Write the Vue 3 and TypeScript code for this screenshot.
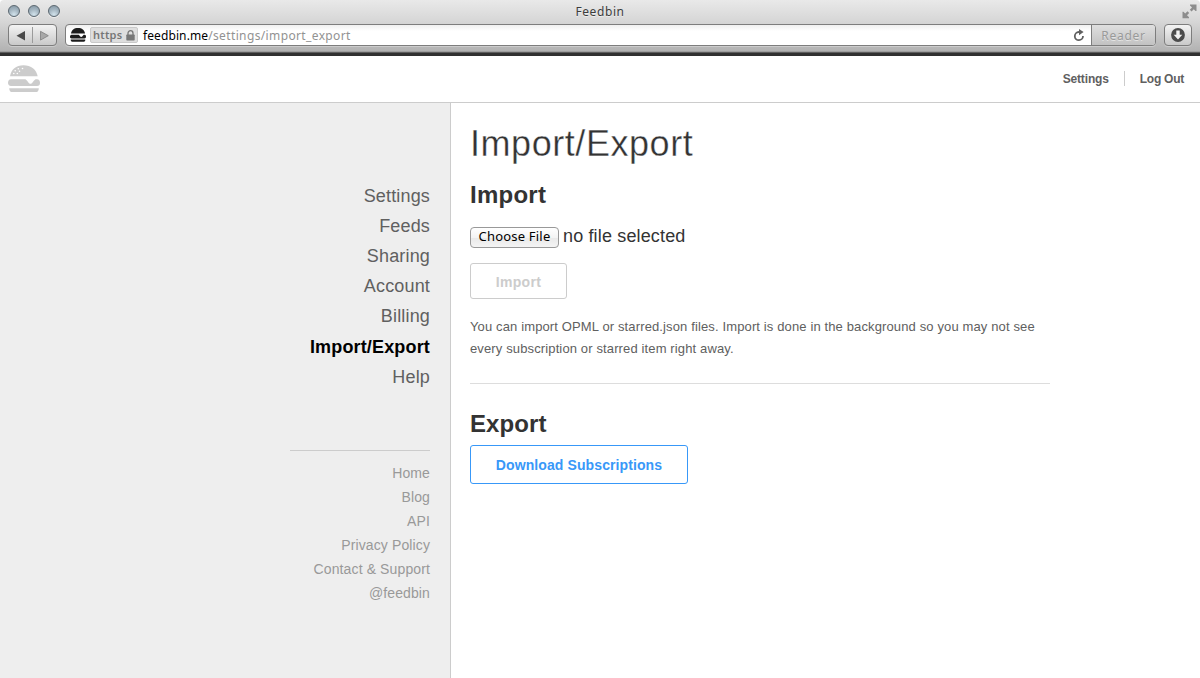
<script setup lang="ts">
interface NavItem {
  label: string
  active?: boolean
}

const navItems: NavItem[] = [
  { label: 'Settings' },
  { label: 'Feeds' },
  { label: 'Sharing' },
  { label: 'Account' },
  { label: 'Billing' },
  { label: 'Import/Export', active: true },
  { label: 'Help' },
]

const footerItems: string[] = ['Home', 'Blog', 'API', 'Privacy Policy', 'Contact & Support', '@feedbin']
</script>

<template>
  <div class="window">
    <header class="chrome">
      <div class="titlebar">
        <div class="lights"><i></i><i></i><i></i></div>
        <span class="title">Feedbin</span>
        <svg class="fullscreen" width="15" height="15" viewBox="0 0 15 15">
          <path d="M8 .5h6.500v6.500h-1l-1.700-1.700-2.300 2.200-1.700-1.700 2.200-2.300L8 1.500z" fill="#8d8d8d" />
          <path d="M.5 7.700h1l1.700 1.700 2.300-2.200 1.700 1.700-2.200 2.300 2 2v1H.5z" fill="#8d8d8d" />
        </svg>
      </div>
      <div class="toolbar">
        <div class="history">
          <svg width="47" height="20" viewBox="0 0 47 20">
            <path d="M16 6v9.500L7.500 10.700z" fill="#4a4a4a" />
            <path d="M23.500 2v16" stroke="#9b9b9b" />
            <path d="M31.500 6.300v8.800l7.800-4.400z" fill="#a8a8a8" stroke="#7d7d7d" stroke-width=".8" />
          </svg>
        </div>
        <div class="address">
          <svg class="favicon" width="16" height="14" viewBox="0 0 32 28">
            <path d="M2 11C3 4 8 0 16 0s13 4 14 11z" fill="#1c1c1c" />
            <path d="M3 13.500h14.500c2.200 1.500 3 4.500 5 4.500s2.700-3 5-4.500H29c2 0 3 1.500 3 3.500S31 21 29 21H3c-2 0-3-1.500-3-3.500s1-4 3-4z" fill="#1c1c1c" />
            <path d="M1.500 23h29v1c0 2-1 3.500-3 3.500h-23c-2 0-3-1.500-3-3.500z" fill="#1c1c1c" />
          </svg>
          <span class="secure">
            <span class="scheme">https</span>
            <svg width="9" height="11" viewBox="0 0 9 11">
              <path d="M2 5V3.200a2.500 2.500 0 0 1 5 0V5" fill="none" stroke="#777" stroke-width="1.300" />
              <rect x=".3" y="4.500" width="8.400" height="6" rx=".7" fill="#777" />
            </svg>
          </span>
          <span class="host">feedbin.me</span><span class="path">/settings/import_export</span>
          <svg class="reload" width="12" height="13" viewBox="0 0 12 13">
            <path d="M7 3H5.800A4.100 4.100 0 1 0 10 7.100" fill="none" stroke="#606060" stroke-width="1.800" />
            <path d="M6 0l4.600 3-4.600 3.200z" fill="#606060" />
          </svg>
          <span class="reader">Reader</span>
        </div>
        <div class="downloads">
          <svg width="14" height="14" viewBox="0 0 14 14">
            <circle cx="7" cy="7" r="6.900" fill="#4b4b4b" />
            <path d="M5.300 2.600h3.400v4.200h2.600L7 11.600 2.700 6.800h2.600z" fill="#f1f1f1" />
          </svg>
        </div>
      </div>
    </header>

    <div class="site-header">
      <svg class="logo" width="32" height="28" viewBox="0 0 32 28">
        <path d="M2 11.300C3 4.500 8 .200 15.500 .200S28.500 4.500 29.700 11.300z" fill="#ccc" />
        <path d="M3 14.200h14.500c2.200 1.500 3 4.600 5 4.600s2.700-3.100 5-4.600H29c2 0 3 1.500 3 3.600S31 21 29 21H3c-2 0-3-1.200-3-3.200s1-3.600 3-3.600z" fill="#ccc" />
        <path d="M1.200 23.200h29.600c0 2.400-1 3.900-3 3.900H4.200c-2 0-3-1.500-3-3.900z" fill="#ccc" />
        <g fill="#fff">
          <circle cx="10.300" cy="3.800" r=".8" /><circle cx="14.500" cy="3.500" r=".8" />
          <circle cx="7.200" cy="5.800" r=".8" /><circle cx="11.500" cy="6.200" r=".8" />
          <circle cx="5.800" cy="8.500" r=".8" /><circle cx="9.300" cy="8.500" r=".8" />
        </g>
      </svg>
      <nav class="account">
        <a class="settings">Settings</a>
        <a class="logout">Log Out</a>
      </nav>
    </div>

    <div class="body">
      <aside class="sidebar">
        <ul class="nav">
          <li v-for="item in navItems" :key="item.label" :class="{ active: item.active }">
            <span>{{ item.label }}</span>
          </li>
        </ul>
        <ul class="links">
          <li v-for="label in footerItems" :key="label">{{ label }}</li>
        </ul>
      </aside>
      <main class="content">
        <h1>Import/Export</h1>
        <h2 class="import-title">Import</h2>
        <div class="file-row">
          <button class="choose">Choose File</button>
          <span class="file-name">no file selected</span>
        </div>
        <button class="import-button">Import</button>
        <p>You can import OPML or starred.json files. Import is done in the background so you may not see<br />every subscription or starred item right away.</p>
        <hr />
        <h2 class="export-title">Export</h2>
        <button class="download-button">Download Subscriptions</button>
      </main>
    </div>
  </div>
</template>

<style>
body {
  margin: 0;
  background: #fff;
}
</style>

<style scoped>
* {
  box-sizing: border-box;
}
.window {
  width: 1200px;
  height: 678px;
  overflow: hidden;
  display: flex;
  flex-direction: column;
  font-family: "Liberation Sans", Arial, sans-serif;
  color: #333;
}
.chrome {
  height: 56px;
  flex: none;
  background: linear-gradient(#e9e9e9, #d6d6d6 22px, #b2b2b2 51px, #8a8a8a 52px, #303030 53px, #303030);
  border-radius: 4px 4px 0 0;
  font-family: "Noto Sans", "Open Sans", sans-serif;
}
.titlebar {
  height: 24px;
  position: relative;
  display: flex;
  justify-content: center;
}
.lights {
  position: absolute;
  left: 8px;
  top: 5px;
  display: flex;
  gap: 8px;
}
.lights i {
  width: 12px;
  height: 12px;
  border-radius: 50%;
  border: 1px solid #5b6770;
  background: radial-gradient(circle at 50% 85%, #d3e3ec 0, #a5b6c1 50%, #8295a2 100%);
  box-shadow: 0 1px 0 #eee;
}
.title {
  font-size: 12px;
  line-height: 23px;
  letter-spacing: 0.6px;
  color: #3c3c3c;
  text-shadow: 0 1px 0 #eee;
}
.fullscreen {
  position: absolute;
  right: 3px;
  top: 4px;
}
.toolbar {
  display: flex;
  height: 22px;
  padding: 0 8px;
}
.history {
  width: 49px;
  height: 22px;
  border: 1px solid #7d7d7d;
  border-radius: 4px;
  background: linear-gradient(#f3f3f3, #c9c9c9);
  box-shadow: 0 1px 0 #ccc;
}
.history svg {
  display: block;
}
.address {
  margin-left: 8px;
  width: 1091px;
  height: 22px;
  display: flex;
  align-items: center;
  border: 1px solid #7d7d7d;
  border-radius: 4px;
  background: linear-gradient(#f0f0f0, #fff 6px);
  box-shadow: 0 1px 0 #ccc;
  font-size: 12px;
  line-height: 20px;
  white-space: nowrap;
}
.favicon {
  margin-left: 4px;
}
.secure {
  width: 48px;
  height: 16px;
  margin: 0 5px 0 4px;
  padding: 0 2px;
  display: flex;
  align-items: center;
  justify-content: space-between;
  background: #dedede;
  border: 1px solid #c9c9c9;
  border-radius: 2px;
  color: #777;
}
.scheme {
  font-size: 11px;
  font-weight: 600;
  letter-spacing: 0.2px;
}
.host,
.path {
  padding-top: 2px;
}
.host {
  color: #000;
  letter-spacing: 0.1px;
}
.path {
  color: #929292;
  letter-spacing: 0.37px;
}
.reload {
  margin-left: auto;
  margin-right: 6px;
}
.reader {
  width: 64px;
  height: 20px;
  border-left: 1px solid #7d7d7d;
  border-radius: 0 3px 3px 0;
  background: linear-gradient(#dfdfdf, #c2c2c2);
  color: #999;
  text-align: center;
  line-height: 21px;
  letter-spacing: 0.7px;
  text-shadow: 0 1px 0 #e4e4e4;
}
.downloads {
  width: 28px;
  height: 22px;
  margin-left: 8px;
  display: flex;
  align-items: center;
  justify-content: center;
  border: 1px solid #7d7d7d;
  border-radius: 4px;
  background: linear-gradient(#f3f3f3, #c9c9c9);
  box-shadow: 0 1px 0 #ccc;
}
.site-header {
  height: 47px;
  flex: none;
  display: flex;
  align-items: flex-start;
  justify-content: space-between;
  padding: 9px 16px 0 8px;
  border-bottom: 1px solid #ccc;
}
.account {
  display: flex;
  margin-top: 6px;
  font-size: 12px;
  font-weight: bold;
  line-height: 16px;
  letter-spacing: -0.15px;
  color: #606060;
}
.account a {
  height: 15px;
}
.settings {
  padding-right: 15px;
  border-right: 1px solid #ccc;
}
.logout {
  padding-left: 15px;
  letter-spacing: -0.25px;
}
.body {
  flex: 1;
  display: flex;
}
.sidebar {
  width: 451px;
  background: #eee;
  border-right: 1px solid #ccc;
  padding: 78px 20px 0 0;
  display: flex;
  flex-direction: column;
  align-items: flex-end;
}
ul {
  list-style: none;
  margin: 0;
  padding: 0;
  text-align: right;
}
.nav {
  font-size: 18px;
  line-height: 30px;
  letter-spacing: 0.16px;
  color: #606060;
}
.nav .active {
  color: #000;
  font-weight: bold;
  padding-top: 1px;
}
.links {
  width: 140px;
  margin-top: 58px;
  padding-top: 10px;
  border-top: 1px solid #ccc;
  font-size: 14px;
  line-height: 24px;
  letter-spacing: 0.12px;
  color: #999;
}
.content {
  width: 620px;
  padding: 20px 20px 0 19px;
}
h1 {
  margin: 0;
  font-size: 36px;
  line-height: 42px;
  font-weight: normal;
  letter-spacing: 0.55px;
  -webkit-text-stroke: 0.35px #fff;
}
h2 {
  margin: 0;
  font-size: 24px;
  line-height: 30px;
  letter-spacing: 0.25px;
}
.import-title {
  margin-top: 15px;
}
.file-row {
  display: flex;
  align-items: flex-start;
  margin-top: 14px;
  height: 22px;
}
button {
  display: block;
  margin: 0;
  padding: 0;
  text-align: center;
  font-family: inherit;
  background: #fff;
  white-space: nowrap;
}
.choose {
  width: 89px;
  height: 21px;
  margin-top: 3px;
  padding-bottom: 2px;
  border: 1px solid #999;
  border-radius: 4px;
  background: linear-gradient(#fff, #f4f4f4 50%, #e9e9e9 52%, #f4f4f4);
  font: 13px/17px "Noto Sans", sans-serif;
  letter-spacing: 0.2px;
  color: #000;
}
.file-name {
  margin-left: 4px;
  font-size: 18px;
  line-height: 24px;
  letter-spacing: 0.15px;
}
.import-button {
  width: 97px;
  height: 36px;
  margin-top: 17px;
  padding-top: 1px;
  border: 1px solid #ccc;
  border-radius: 3px;
  font-size: 14px;
  font-weight: bold;
  letter-spacing: 0.3px;
  color: #ccc;
}
p {
  margin: 17px 0 0;
  font-size: 13px;
  line-height: 22px;
  letter-spacing: 0.13px;
  color: #606060;
  white-space: nowrap;
}
hr {
  height: 1px;
  width: 580px;
  border: 0;
  margin: 23px 0 0;
  background: #ddd;
}
.export-title {
  margin-top: 25px;
  letter-spacing: 0.1px;
}
.download-button {
  width: 218px;
  height: 39px;
  margin-top: 6px;
  border: 1px solid #3898f8;
  border-radius: 3px;
  font-size: 14px;
  font-weight: bold;
  letter-spacing: 0.1px;
  color: #3898f8;
}
</style>
